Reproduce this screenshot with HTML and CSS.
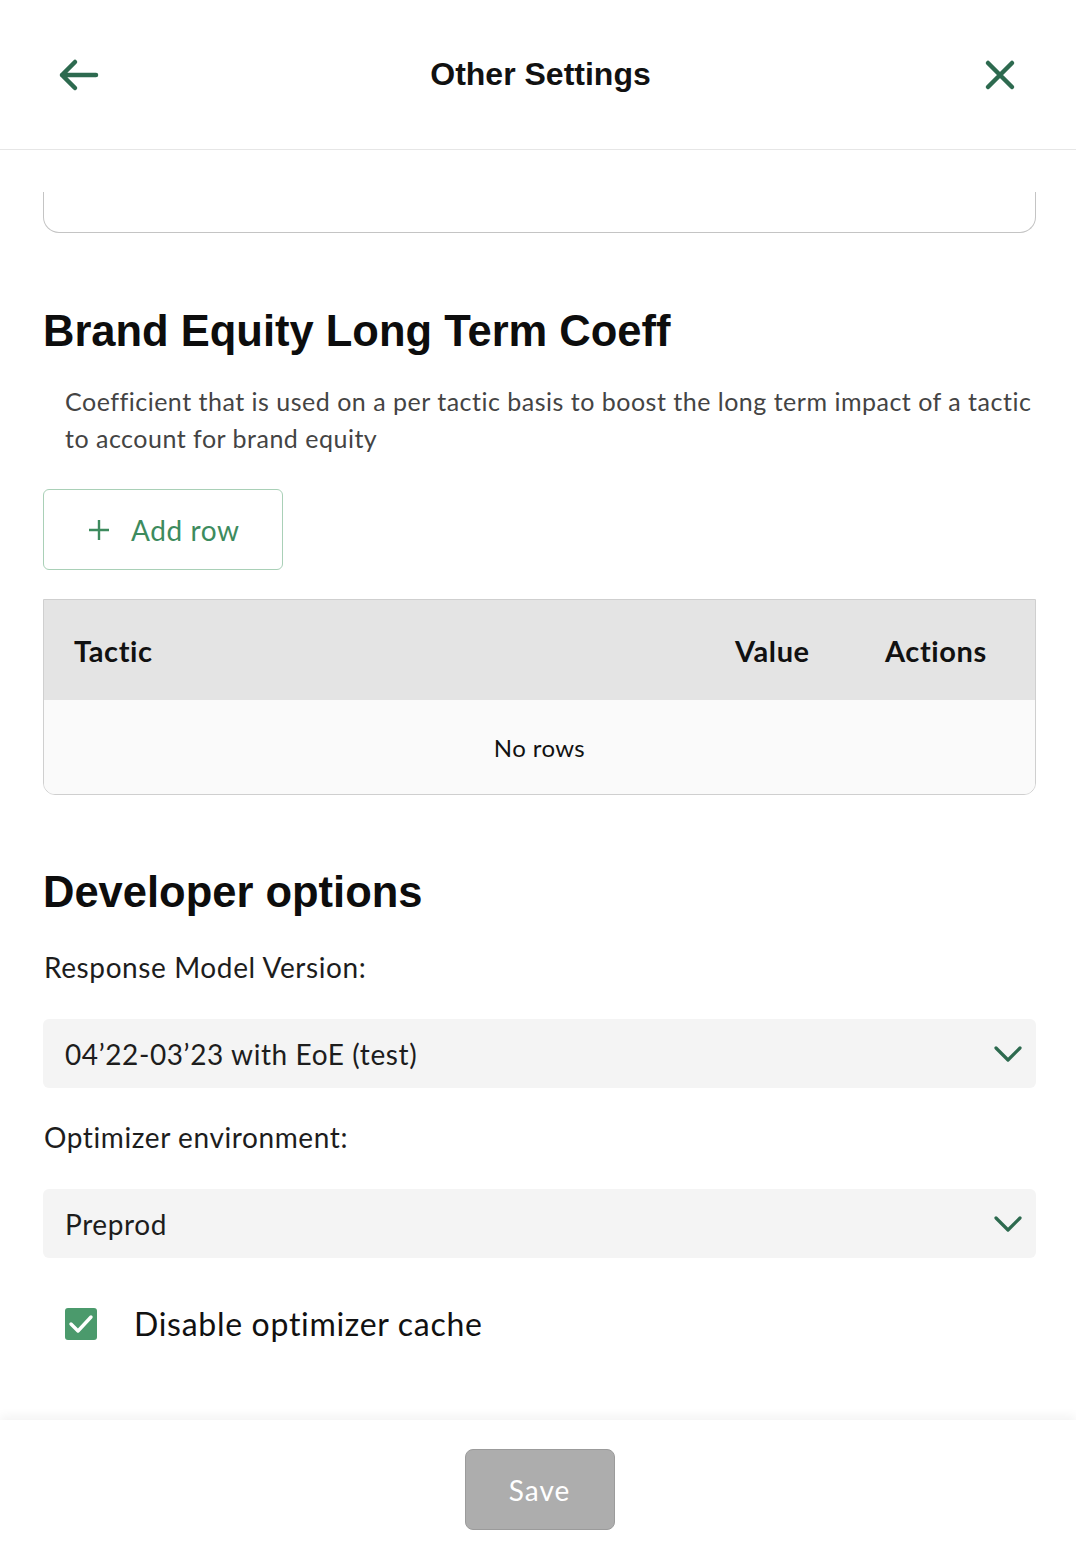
FILE: index.html
```html
<!DOCTYPE html>
<html lang="en">
<head>
  <meta charset="UTF-8">
  <title>Other Settings</title>
  <link rel="stylesheet" href="styles.css">
</head>
<body>
  <div class="modal">
    <header class="top-bar">
      <button class="icon-btn back" aria-label="Back">
        <svg width="44" height="36" viewBox="0 0 44 36"><path d="M4 18 H38 M4 18 L17 5 M4 18 L17 31" fill="none" stroke="#2d6a4f" stroke-width="4.5" stroke-linecap="round" stroke-linejoin="round"/></svg>
      </button>
      <h1>Other Settings</h1>
      <button class="icon-btn close" aria-label="Close">
        <svg width="32" height="32" viewBox="0 0 32 32"><path d="M4 4 L28 28 M28 4 L4 28" fill="none" stroke="#2d6a4f" stroke-width="4.5" stroke-linecap="round"/></svg>
      </button>
    </header>

    <main class="content">
      <!-- previous section, scrolled mostly out of view -->
      <div class="card-stub"></div>

      <section class="section">
        <h2>Brand Equity Long Term Coeff</h2>
        <p class="desc">Coefficient that is used on a per tactic basis to boost the long term impact of a tactic to account for brand equity</p>

        <button class="add-row">
          <svg width="22" height="22" viewBox="0 0 22 22"><path d="M11 1 V21 M1 11 H21" stroke="#3d8b5e" stroke-width="2.4"/></svg>
          <span>Add row</span>
        </button>

        <div class="grid">
          <div class="grid-head">
            <div class="col-tactic">Tactic</div>
            <div class="col-value">Value</div>
            <div class="col-actions">Actions</div>
          </div>
          <div class="grid-empty">No rows</div>
        </div>
      </section>

      <section class="section dev">
        <h2>Developer options</h2>

        <label class="field-label">Response Model Version:</label>
        <div class="select">
          <span>04’22-03’23 with EoE (test)</span>
          <svg width="28" height="16" viewBox="0 0 28 16"><path d="M2 2 L14 14 L26 2" fill="none" stroke="#2d6a4f" stroke-width="3.2" stroke-linecap="round" stroke-linejoin="round"/></svg>
        </div>

        <label class="field-label">Optimizer environment:</label>
        <div class="select">
          <span>Preprod</span>
          <svg width="28" height="16" viewBox="0 0 28 16"><path d="M2 2 L14 14 L26 2" fill="none" stroke="#2d6a4f" stroke-width="3.2" stroke-linecap="round" stroke-linejoin="round"/></svg>
        </div>

        <div class="check-row">
          <span class="checkbox">
            <svg width="26" height="22" viewBox="0 0 26 22"><path d="M3 11 L10 18 L23 4" fill="none" stroke="#fff" stroke-width="3.4" stroke-linecap="round" stroke-linejoin="round"/></svg>
          </span>
          <span class="check-label">Disable optimizer cache</span>
        </div>
      </section>
    </main>

    <footer class="bottom-bar">
      <button class="save" disabled>Save</button>
    </footer>
  </div>
</body>
</html>
```

FILE: styles.css
```css
* {
  box-sizing: border-box;
}
html, body {
  margin: 0;
  height: 100%;
}
body {
  font-family: Lato, "Open Sans", sans-serif;
  color: #1d1d1d;
  background: #fff;
}
.modal {
  height: 100vh;
  display: flex;
  flex-direction: column;
  overflow: hidden;
}
.top-bar {
  height: 150px;
  flex-shrink: 0;
  border-bottom: 1px solid #e6e6e6;
  display: grid;
  grid-template-columns: 1fr auto 1fr;
  align-items: center;
  padding: 0 58px;
}
.top-bar h1 {
  margin: 0 0 0 5px;
  font-family: "Liberation Sans", Arial, sans-serif;
  font-size: 32px;
  font-weight: bold;
  color: #111;
}
.icon-btn {
  background: none;
  border: none;
  padding: 0;
  display: flex;
  cursor: pointer;
}
.close {
  justify-self: end;
  margin-right: 2px;
}
.content {
  flex: 1;
  padding: 42px 40px 0 43px;
  overflow: hidden;
}
.card-stub {
  height: 41px;
  border: 1px solid #c4c4c4;
  border-top: none;
  border-radius: 0 0 16px 16px;
}
.section h2 {
  margin: 0;
  font-family: "Liberation Sans", Arial, sans-serif;
  font-size: 43.5px;
  line-height: 52px;
  font-weight: bold;
  color: #0d0d0d;
}
.section:first-of-type {
  padding-top: 72px;
}
.desc {
  margin: 26px 0 32px 22px;
  font-size: 25px;
  letter-spacing: 0.5px;
  line-height: 37px;
  color: #444;
}
.add-row {
  width: 240px;
  height: 81px;
  display: flex;
  align-items: center;
  gap: 21px;
  padding: 0 0 0 44px;
  background: #fff;
  border: 1px solid #a9d0b7;
  border-radius: 6px;
  font-family: inherit;
  font-size: 28px;
  letter-spacing: 0.6px;
  color: #3d8b5e;
  cursor: pointer;
}
.grid {
  margin-top: 29px;
  border: 1px solid #cfcfcf;
  border-radius: 0 0 12px 12px;
  overflow: hidden;
}
.grid-head {
  height: 100px;
  background: #e4e4e4;
  display: flex;
  align-items: center;
  font-size: 29px;
  letter-spacing: 0.6px;
  font-weight: bold;
  color: #111;
  padding-left: 30px;
}
.col-tactic {
  flex: 1;
}
.col-value {
  width: 150px;
}
.col-actions {
  width: 150px;
}
.grid-empty {
  height: 94px;
  background: #fafafa;
  display: flex;
  align-items: center;
  justify-content: center;
  font-size: 24px;
  letter-spacing: 0.4px;
  color: #111;
}
.dev {
  padding-top: 71px;
}
.field-label {
  display: block;
  margin: 32px 0 35px 1px;
  font-size: 28px;
  letter-spacing: 0.6px;
  line-height: 34px;
  color: #1d1d1d;
}
.select {
  height: 69px;
  background: #f4f4f4;
  border-radius: 6px;
  display: flex;
  align-items: center;
  justify-content: space-between;
  padding: 0 14px 0 22px;
  font-size: 28px;
  letter-spacing: 0.6px;
  color: #1d1d1d;
}
.check-row {
  display: flex;
  align-items: center;
  gap: 37px;
  margin: 46px 0 0 22px;
}
.checkbox {
  width: 32px;
  height: 32px;
  border-radius: 3px;
  background: #4b9a6c;
  display: flex;
  align-items: center;
  justify-content: center;
}
.check-label {
  font-size: 32px;
  letter-spacing: 0.7px;
  line-height: 40px;
  color: #111;
}
.bottom-bar {
  height: 134px;
  flex-shrink: 0;
  background: #fff;
  box-shadow: 0 -4px 10px rgba(0, 0, 0, 0.05);
  display: flex;
  align-items: flex-start;
  justify-content: center;
  padding: 29px 0 0 3px;
}
.save {
  width: 150px;
  height: 81px;
  background: #adadad;
  border: 1px solid #9b9b9b;
  border-radius: 8px;
  font-family: inherit;
  font-size: 28px;
  letter-spacing: 1px;
  color: #fff;
}
```
